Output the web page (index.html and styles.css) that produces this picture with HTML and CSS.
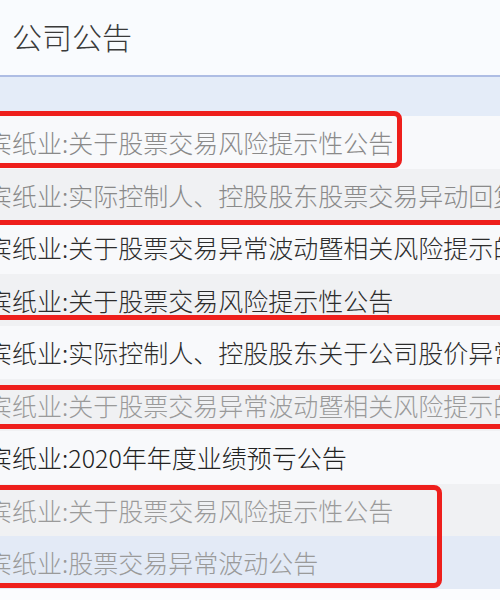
FILE: index.html
```html
<!DOCTYPE html>
<html lang="zh-CN">
<head>
<meta charset="utf-8">
<title>公司公告</title>
<link rel="stylesheet" href="styles.css">
</head>
<body>
<div class="page">
  <header class="head">
    <h1 class="title">公司公告</h1>
  </header>
  <section class="list">
    <div class="list-band"></div>
    <ul class="rows">
      <li class="row read">宜宾纸业:关于股票交易风险提示性公告</li>
      <li class="row read">宜宾纸业:实际控制人、控股股东股票交易异动回复的公告</li>
      <li class="row">宜宾纸业:关于股票交易异常波动暨相关风险提示的公告</li>
      <li class="row">宜宾纸业:关于股票交易风险提示性公告</li>
      <li class="row">宜宾纸业:实际控制人、控股股东关于公司股价异常波动的回复</li>
      <li class="row read light">宜宾纸业:关于股票交易异常波动暨相关风险提示的公告</li>
      <li class="row strong">宜宾纸业:2020年年度业绩预亏公告</li>
      <li class="row read light">宜宾纸业:关于股票交易风险提示性公告</li>
      <li class="row read light hover">宜宾纸业:股票交易异常波动公告</li>
    </ul>
    <!-- highlight frames drawn over the list -->
    <div class="mark mark-a"></div>
    <div class="mark mark-b"></div>
    <div class="mark mark-c"></div>
    <div class="mark mark-d"></div>
  </section>
</div>
</body>
</html>
```

FILE: styles.css
```css
html, body {
  margin: 0;
  padding: 0;
  background: #fbfcfe;
}

body {
  width: 500px;
  height: 600px;
  overflow: hidden;
  font-family: "Noto Sans CJK SC", "Noto Sans", sans-serif;
}

.page {
  width: 500px;
}

.head {
  height: 77px;
  display: flex;
  align-items: center;
  padding: 0 0 3px 12px;
  box-sizing: border-box;
  background: #f9fbfe;
  border-bottom: 2px solid #aebde4;
}

.title {
  margin: 0;
  font-size: 30px;
  font-weight: 300;
  color: #3a3a3a;
}

.list {
  position: relative;
  margin-left: -50px;
  width: 600px;
}

.list-band {
  height: 39px;
  background: #e4ecf8;
}

.rows {
  list-style: none;
  margin: 0;
  padding: 0;
}

.row {
  height: 52.5px;
  line-height: 52.5px;
  padding-left: 12px;
  font-size: 25px;
  font-weight: 300;
  color: #2c2c2c;
  white-space: nowrap;
  overflow: hidden;
  background: #f8f9fb;
}

.row:nth-child(even) {
  background: #f0f1f3;
}

.row.read {
  color: #8a8a8a;
}

.row.light {
  color: #9a9a9a;
}

.row.strong {
  color: #222;
}

.row.hover {
  background: #e3eaf6;
}

/* red rounded frames over selected rows */
.mark {
  position: absolute;
  box-sizing: border-box;
  border: 5px solid #ee1f1c;
  border-radius: 8px;
  pointer-events: none;
}

.mark-a {
  top: 34px;
  left: 30px;
  width: 422px;
  height: 57px;
}

.mark-b {
  top: 143px;
  left: 30px;
  width: 540px;
  height: 100px;
}

.mark-c {
  top: 308px;
  left: 30px;
  width: 540px;
  height: 44px;
}

.mark-d {
  top: 408px;
  left: 30px;
  width: 462px;
  height: 103px;
}
```
